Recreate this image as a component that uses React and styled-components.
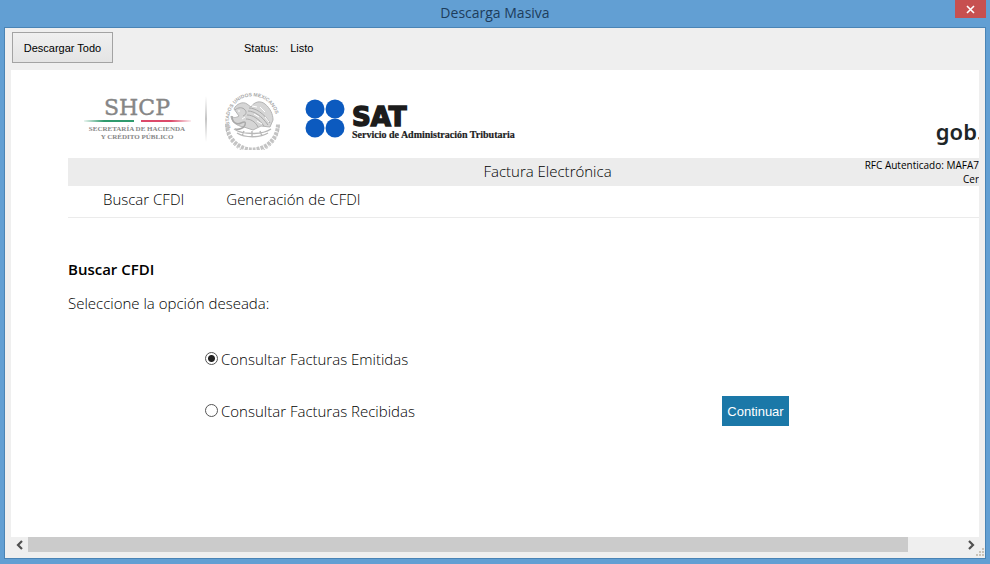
import { useState } from "react";
import styled, { createGlobalStyle } from "styled-components";

const OPTIONS = [
  { id: "emitidas", label: "Consultar Facturas Emitidas" },
  { id: "recibidas", label: "Consultar Facturas Recibidas" },
];

const App = () => {
  const [option, setOption] = useState("emitidas");

  return (
    <>
      <GlobalStyle />
      <Window>
        <TitleBar>
          <h1>Descarga Masiva</h1>
          <CloseButton type="button" aria-label="Cerrar">
            <svg width="9" height="9" viewBox="0 0 9 9">
              <path d="M1 1l7 7M8 1l-7 7" stroke="#fff" strokeWidth="1.6" />
            </svg>
          </CloseButton>
        </TitleBar>

        <Client>
          <Toolbar>
            <ToolButton type="button">Descargar Todo</ToolButton>
            <Status>
              <span>Status:</span>
              <span>Listo</span>
            </Status>
          </Toolbar>

          <Browser>
            <Page>
              <Brand>
                <ShcpLogo />
                <SatLogo />
                <Gob>gob.</Gob>
              </Brand>

              <Banner>
                <h2>Factura Electrónica</h2>
                <Session>
                  <span>RFC Autenticado: MAFA7</span>
                  <span>Cer</span>
                </Session>
              </Banner>

              <Nav>
                <a href="#buscar">Buscar CFDI</a>
                <a href="#generacion">Generación de CFDI</a>
              </Nav>

              <Search onSubmit={(e) => e.preventDefault()}>
                <h3>Buscar CFDI</h3>
                <p>Seleccione la opción deseada:</p>
                <Choices>
                  <Options>
                    {OPTIONS.map((item) => (
                      <Option key={item.id}>
                        <input
                          type="radio"
                          name="consulta"
                          value={item.id}
                          checked={option === item.id}
                          onChange={() => setOption(item.id)}
                        />
                        {item.label}
                      </Option>
                    ))}
                  </Options>
                  <Continue type="submit">Continuar</Continue>
                </Choices>
              </Search>
            </Page>

            <ScrollBar>
              <ScrollArrow type="button" aria-label="Izquierda">
                <Chevron d="M6 1L2 5l4 4" />
              </ScrollArrow>
              <Track>
                <Thumb />
              </Track>
              <ScrollArrow type="button" aria-label="Derecha">
                <Chevron d="M2 1l4 4-4 4" />
              </ScrollArrow>
            </ScrollBar>
          </Browser>

          <Grip width="10" height="10" viewBox="0 0 10 10" aria-hidden="true">
            <path
              fill="#c9c3b8"
              d="M7 0h2v2h-2zM4 3h2v2h-2zM7 3h2v2h-2zM1 6h2v2h-2zM4 6h2v2h-2zM7 6h2v2h-2z"
            />
          </Grip>
        </Client>
      </Window>
    </>
  );
};

export default App;

const Chevron = ({ d }) => (
  <svg width="8" height="10" viewBox="0 0 8 10">
    <path d={d} fill="none" stroke="#505050" strokeWidth="2.2" />
  </svg>
);

const ShcpLogo = () => (
  <svg width="200" height="62" viewBox="0 0 200 62" role="img" aria-label="SHCP">
    <defs>
      <linearGradient id="green">
        <stop offset="0" stopColor="#2f9a6d" stopOpacity="0.1" />
        <stop offset="0.4" stopColor="#2f9a6d" />
      </linearGradient>
      <linearGradient id="red">
        <stop offset="0.6" stopColor="#dc4a6a" />
        <stop offset="1" stopColor="#dc4a6a" stopOpacity="0.1" />
      </linearGradient>
      <linearGradient id="divider" x1="0" y1="0" x2="0" y2="1">
        <stop offset="0" stopColor="#ccc" stopOpacity="0" />
        <stop offset="0.5" stopColor="#c4c4c4" />
        <stop offset="1" stopColor="#ccc" stopOpacity="0" />
      </linearGradient>
      <path id="ring" d="M146.5 40A23.5 23.5 0 1 1 190.5 40" />
    </defs>
    <g textAnchor="middle" fill="#868686">
      <text x="53" y="27" fontFamily="DejaVu Serif, serif" fontSize="22" stroke="#868686" strokeWidth="0.4">
        SHCP
      </text>
      <g fontFamily="Liberation Serif, serif" fontSize="7" fontWeight="bold">
        <text x="53" y="43">SECRETARÍA DE HACIENDA</text>
        <text x="53" y="51">Y CRÉDITO PÚBLICO</text>
      </g>
    </g>
    <rect x="0" y="32" width="50" height="2" fill="url(#green)" />
    <rect x="57" y="32" width="50" height="2" fill="url(#red)" />
    <rect x="121" y="8" width="2" height="46" fill="url(#divider)" />
    <g fill="none" stroke="#b8b8b8" strokeLinejoin="round">
      <text fill="#a9a9a9" stroke="none" fontFamily="Liberation Sans, sans-serif" fontSize="5" fontWeight="bold">
        <textPath href="#ring">ESTADOS UNIDOS MEXICANOS</textPath>
      </text>
      {/* oak and laurel wreath */}
      <path d="M143 36A25.5 25.5 0 0 0 194 36" strokeWidth="4" strokeDasharray="3 1" stroke="#c4c4c4" />
      <path d="M142 38A26.5 26.5 0 0 0 195 38" strokeWidth="1" strokeDasharray="2 2" />
      {/* eagle: head and breast, wing, tail */}
      <path d="M150 21c2-5 9-8 13-5l4 3c3-5 9-7 14-3 5 4 8 10 8 16l-3 7-9-1-8 4-9-3c-8-1-13-6-13-11 2 2 5 2 8 0z" fill="#d6d6d6" stroke="#b5b5b5" />
      <path d="M151 22c3-3 8-3 10 0 2 2 1 5-2 6M165 20c6 0 15 5 21 15M164 23c6 0 14 5 20 14M163 27c6 0 12 4 17 11M162 31c4 0 9 2 12 8" stroke="#a9a9a9" />
      <path d="M148 28c0 7 5 9 9 7s5-1 4 2-6 5-10 4" stroke="#a9a9a9" strokeWidth="1.5" />
      <path d="M154 23h2M168 18l5 1M176 19l5 5M181 29l4 5M170 26l5 3M158 31l3-2M173 33l5 3" stroke="#fff" />
      <path d="M150 41c9 6 28 6 37 0M153 45c8 5 23 5 31 0M160 43l-2 5M168 43v6M176 43l2 5" strokeWidth="1.4" />
    </g>
  </svg>
);

const SatLogo = () => (
  <svg width="222" height="48" viewBox="0 0 222 48" role="img" aria-label="SAT">
    <g fill="#0c5abf">
      <circle cx="11" cy="15" r="9.5" />
      <circle cx="31" cy="15" r="9.5" />
      <circle cx="11" cy="34" r="9.5" />
      <circle cx="31" cy="34" r="9.5" />
    </g>
    <g fill="#1c1c1c" stroke="#1c1c1c">
      <text x="48" y="32" fontFamily="DejaVu Sans, sans-serif" fontSize="26" fontWeight="bold" strokeWidth="1.6">
        SAT
      </text>
      <text x="48" y="44" fontFamily="Liberation Serif, serif" fontSize="10" fontWeight="bold" strokeWidth="0.2">
        Servicio de Administración Tributaria
      </text>
    </g>
  </svg>
);

const GlobalStyle = createGlobalStyle`
  * {
    box-sizing: border-box;
  }
  body {
    margin: 0;
    font-family: "Open Sans", sans-serif;
    color: #000;
  }
  h1, h2, h3, p {
    margin: 0;
    font-weight: 400;
  }
  button {
    border: none;
    padding: 0;
    font-family: inherit;
  }
`;

const Window = styled.div`
  display: flex;
  flex-direction: column;
  min-height: 100vh;
  padding: 0 4px 5px;
  background: #629fd3;
`;

const TitleBar = styled.header`
  position: relative;
  height: 27px;
  text-align: center;

  h1 {
    font-size: 14px;
    line-height: 26px;
    color: #1d3d5c;
  }
`;

const CloseButton = styled.button`
  position: absolute;
  top: 0;
  right: 0;
  display: flex;
  align-items: center;
  justify-content: center;
  width: 31px;
  height: 18px;
  background: #c75050;
`;

const Client = styled.main`
  position: relative;
  flex: 1;
  display: flex;
  flex-direction: column;
  border: 1px solid #4a84b5;
  padding: 4px 6px 6px;
  background: #efefef;
`;

const Toolbar = styled.div`
  display: flex;
  align-items: center;
  gap: 131px;
  height: 38px;
  padding: 0 1px 7px;
  font-family: "Liberation Sans", sans-serif;
  font-size: 11px;
`;

const ToolButton = styled.button`
  width: 101px;
  height: 31px;
  border: 1px solid #a3a3a3;
  background: linear-gradient(#f0f0f0, #e4e4e4);
  font-size: 11px;
  color: #000;
`;

const Status = styled.div`
  display: flex;
  gap: 12px;
`;

const Browser = styled.section`
  flex: 1;
  display: flex;
  flex-direction: column;
  overflow: hidden;
  background: #fff;
`;

const Page = styled.div`
  flex: 1;
  padding-left: 57px;
`;

const Brand = styled.div`
  display: flex;
  align-items: flex-start;
  height: 88px;
  padding: 18px 0 0 16px;

  svg + svg {
    margin: 6px 0 0 20px;
  }
`;

const Gob = styled.div`
  margin: 28px -4px 0 auto;
  font-family: "Noto Sans", sans-serif;
  font-size: 22px;
  line-height: 30px;
  font-weight: 600;
  color: #1e2627;
`;

const Banner = styled.div`
  display: grid;
  grid-template-columns: 1fr auto 1fr;
  height: 28px;
  padding-left: 48px;
  background: #ececec;

  h2 {
    grid-column: 2;
    font-size: 15px;
    font-weight: 350;
    line-height: 26px;
  }
`;

const Session = styled.div`
  display: flex;
  flex-direction: column;
  align-items: flex-end;
  font-size: 10px;
  line-height: 14px;
`;

const Nav = styled.nav`
  display: flex;
  gap: 42px;
  height: 32px;
  padding-left: 35px;
  border-bottom: 1px solid #ebebeb;

  a {
    font-size: 15px;
    font-weight: 350;
    line-height: 26px;
    color: #000;
    text-decoration: none;
  }
`;

const Search = styled.form`
  padding-top: 41px;
  font-size: 15px;
  font-weight: 350;
  line-height: 20px;

  h3 {
    font-size: 15px;
    font-weight: 600;
  }
  p {
    margin-top: 14px;
    font-weight: 350;
  }
`;

const Choices = styled.div`
  display: flex;
  align-items: flex-end;
  justify-content: space-between;
  padding: 36px 190px 0 137px;
`;

const Options = styled.div`
  display: flex;
  flex-direction: column;
  gap: 32px;
  padding-bottom: 5px;
`;

const Option = styled.label`
  display: flex;
  align-items: flex-start;
  gap: 3px;

  input {
    appearance: none;
    width: 13px;
    height: 13px;
    margin: 3px 0 0;
    border: 1px solid #555;
    border-radius: 50%;
    background: #fff;
  }
  input:checked {
    background: radial-gradient(circle, #222 3px, #fff 4px);
  }
`;

const Continue = styled.button`
  width: 67px;
  height: 30px;
  background: #1b78a8;
  font-family: "Liberation Sans", sans-serif;
  font-size: 13px;
  color: #fff;
`;

const ScrollBar = styled.div`
  display: flex;
  height: 15px;
  background: #efefef;
`;

const ScrollArrow = styled.button`
  display: flex;
  align-items: center;
  justify-content: center;
  width: 17px;
  background: none;
`;

const Track = styled.div`
  flex: 1;
  padding-right: 54px;
`;

const Thumb = styled.div`
  height: 100%;
  background: #cbcbcb;
`;

const Grip = styled.svg`
  position: absolute;
  right: 0;
  bottom: 0;
`;
